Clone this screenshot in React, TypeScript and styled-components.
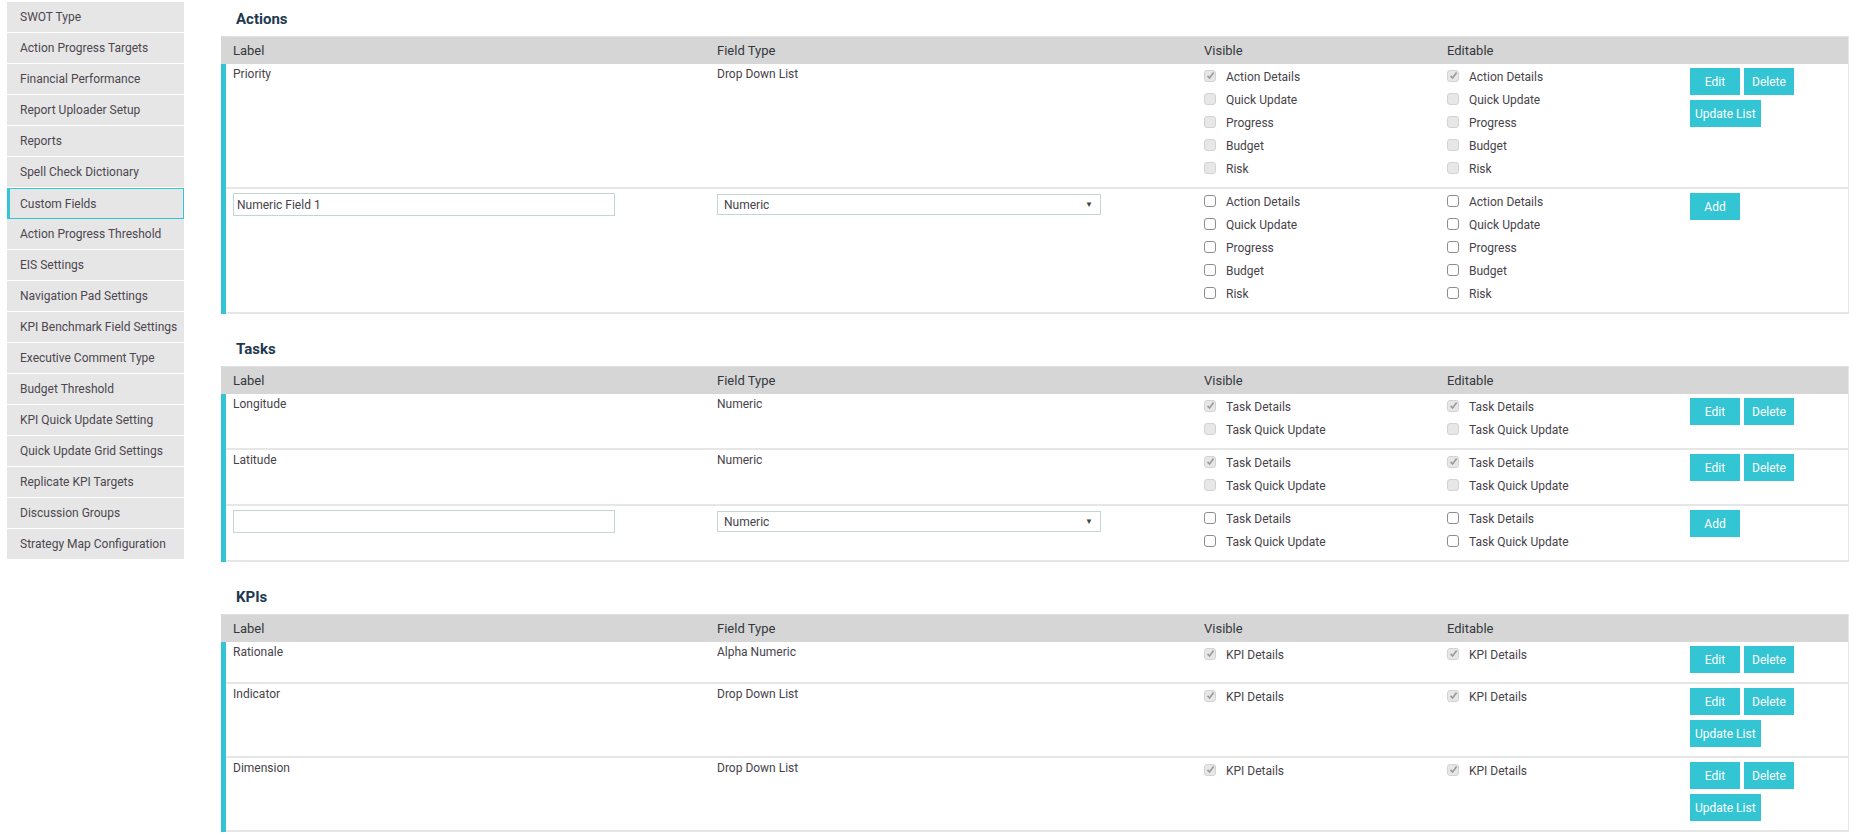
import React from "react";
import styled, { createGlobalStyle, css } from "styled-components";

const TEAL = "#33c5d4";

const GlobalStyle = createGlobalStyle`
  html, body {
    margin: 0;
    padding: 0;
    background: #ffffff;
    overflow: hidden;
  }
  body {
    font-family: Roboto, "Liberation Sans", Arial, sans-serif;
    font-size: 12px;
    color: #444;
  }
  * { box-sizing: border-box; }
`;

const Page = styled.div`
  display: flex;
  align-items: flex-start;
  padding-left: 7px;
  padding-right: 15px;
`;

const Sidebar = styled.nav`
  width: 177px;
  flex-shrink: 0;
  margin-top: 2px;
  display: flex;
  flex-direction: column;
`;

const NavItem = styled.div<{ $active?: boolean }>`
  height: 31px;
  display: flex;
  align-items: center;
  padding-left: 13px;
  background: #e6e6e6;
  border-bottom: 1px solid #ffffff;
  font-size: 12px;
  color: #4d4650;
  white-space: nowrap;
  ${(p) =>
    p.$active &&
    css`
      border: 1px solid ${TEAL};
      border-left: 3px solid ${TEAL};
      padding-left: 10px;
    `}
`;

const Main = styled.main`
  flex: 1;
  margin-left: 37px;
  padding-top: 10px;
  display: flex;
  flex-direction: column;
  gap: 26px;
`;

const Section = styled.section`
  display: flex;
  flex-direction: column;
`;

const Heading = styled.h3`
  margin: 0 0 8px 15px;
  font-size: 15px;
  line-height: 18px;
  font-weight: 700;
  color: #22384f;
`;

const COLS = "484fr 487fr 243fr 243fr 165fr";

const HeaderRow = styled.div`
  display: grid;
  grid-template-columns: ${COLS};
  height: 28px;
  background: #d6d6d6;
  border-top: 1px solid #e3e3e3;
  border-left: 5px solid #d6d6d6;
  border-right: 1px solid #e6e6e6;
  align-items: center;
  font-size: 13px;
  color: #34383d;
`;

const HeaderCell = styled.div`
  padding: 0 7px;
`;

const Body = styled.div`
  border-left: 5px solid ${TEAL};
  border-right: 1px solid #e6e6e6;
  display: flex;
  flex-direction: column;
`;

const Row = styled.div`
  display: grid;
  grid-template-columns: ${COLS};
  border-bottom: 2px solid #e6e6e6;
  align-items: start;
`;

const TextCell = styled.div`
  padding: 1px 7px 0;
  line-height: 18px;
  font-size: 12px;
  color: #47434b;
`;

const InputCell = styled.div`
  padding: 4px 7px 0;
`;

const TextInput = styled.input`
  width: 382px;
  height: 23px;
  border: 1px solid #c4d5d8;
  padding: 0 3px;
  font-family: Roboto, "Liberation Sans", Arial, sans-serif;
  font-size: 12px;
  color: #47434b;
  background: #fff;
  outline: none;
`;

const SelectBox = styled.div`
  margin-top: 1px;
  width: 384px;
  height: 21px;
  border: 1px solid #c4d5d8;
  display: flex;
  align-items: center;
  justify-content: space-between;
  padding: 0 7px 0 6px;
  font-size: 12px;
  color: #47434b;
  background: #fff;
`;

const Arrow = styled.span`
  font-size: 8px;
  color: #444;
`;

const CheckCell = styled.div`
  padding: 1px 7px 7px;
  display: flex;
  flex-direction: column;
`;

const CheckItem = styled.div`
  height: 23px;
  display: flex;
  align-items: center;
  gap: 10px;
  font-size: 12px;
  color: #47434b;
`;

const Box = styled.span<{ $disabled?: boolean }>`
  width: 12px;
  height: 12px;
  flex-shrink: 0;
  border-radius: 3px;
  display: flex;
  align-items: center;
  justify-content: center;
  margin-top: -2px;
  ${(p) =>
    p.$disabled
      ? css`
          background: #e7e7e7;
          border: 1px solid #d3d3d3;
        `
      : css`
          background: #fff;
          border: 1px solid #8e8e8e;
        `}
`;

const ActionCell = styled.div`
  padding: 4px 7px 9px;
  display: flex;
  flex-direction: column;
  gap: 5px;
`;

const ButtonRow = styled.div`
  display: flex;
  gap: 4px;
`;

const Button = styled.button`
  height: 27px;
  min-width: 50px;
  padding: 0 5px;
  border: none;
  border-radius: 0;
  background: ${TEAL};
  color: #fff;
  font-family: Roboto, "Liberation Sans", Arial, sans-serif;
  font-size: 12px;
  cursor: pointer;
`;

type Check = { label: string; checked?: boolean };

function Checkbox({ checked, disabled }: { checked?: boolean; disabled?: boolean }) {
  return (
    <Box $disabled={disabled}>
      {checked && (
        <svg width="9" height="9" viewBox="0 0 9 9">
          <path d="M1.5 4.8 L3.6 7 L7.6 1.6" fill="none" stroke="#9c9c9c" strokeWidth="1.7" />
        </svg>
      )}
    </Box>
  );
}

function CheckList({ items, disabled }: { items: Check[]; disabled?: boolean }) {
  return (
    <CheckCell>
      {items.map((it) => (
        <CheckItem key={it.label}>
          <Checkbox checked={it.checked} disabled={disabled} />
          <span>{it.label}</span>
        </CheckItem>
      ))}
    </CheckCell>
  );
}

type FieldRow = {
  label: string;
  type: string;
  items: Check[];
  list?: boolean;
  isNew?: boolean;
};

function Header() {
  return (
    <HeaderRow>
      <HeaderCell>Label</HeaderCell>
      <HeaderCell>Field Type</HeaderCell>
      <HeaderCell>Visible</HeaderCell>
      <HeaderCell>Editable</HeaderCell>
      <HeaderCell />
    </HeaderRow>
  );
}

function FieldTableRow({ row }: { row: FieldRow }) {
  return (
    <Row>
      {row.isNew ? (
        <InputCell>
          <TextInput defaultValue={row.label} />
        </InputCell>
      ) : (
        <TextCell>{row.label}</TextCell>
      )}
      {row.isNew ? (
        <InputCell>
          <SelectBox>
            <span>{row.type}</span>
            <Arrow>▼</Arrow>
          </SelectBox>
        </InputCell>
      ) : (
        <TextCell>{row.type}</TextCell>
      )}
      <CheckList items={row.items} disabled={!row.isNew} />
      <CheckList items={row.items} disabled={!row.isNew} />
      <ActionCell>
        {row.isNew ? (
          <ButtonRow>
            <Button>Add</Button>
          </ButtonRow>
        ) : (
          <>
            <ButtonRow>
              <Button>Edit</Button>
              <Button>Delete</Button>
            </ButtonRow>
            {row.list && (
              <ButtonRow>
                <Button>Update List</Button>
              </ButtonRow>
            )}
          </>
        )}
      </ActionCell>
    </Row>
  );
}

function FieldSection({ title, rows }: { title: string; rows: FieldRow[] }) {
  return (
    <Section>
      <Heading>{title}</Heading>
      <Header />
      <Body>
        {rows.map((r, i) => (
          <FieldTableRow key={i} row={r} />
        ))}
      </Body>
    </Section>
  );
}

const actionItems = (first: boolean): Check[] => [
  { label: "Action Details", checked: first },
  { label: "Quick Update" },
  { label: "Progress" },
  { label: "Budget" },
  { label: "Risk" },
];

const taskItems = (first: boolean): Check[] => [
  { label: "Task Details", checked: first },
  { label: "Task Quick Update" },
];

const kpiItems: Check[] = [{ label: "KPI Details", checked: true }];

const actions: FieldRow[] = [
  { label: "Priority", type: "Drop Down List", items: actionItems(true), list: true },
  { label: "Numeric Field 1", type: "Numeric", items: actionItems(false), isNew: true },
];

const tasks: FieldRow[] = [
  { label: "Longitude", type: "Numeric", items: taskItems(true) },
  { label: "Latitude", type: "Numeric", items: taskItems(true) },
  { label: "", type: "Numeric", items: taskItems(false), isNew: true },
];

const kpis: FieldRow[] = [
  { label: "Rationale", type: "Alpha Numeric", items: kpiItems },
  { label: "Indicator", type: "Drop Down List", items: kpiItems, list: true },
  { label: "Dimension", type: "Drop Down List", items: kpiItems, list: true },
];

const navItems = [
  "SWOT Type",
  "Action Progress Targets",
  "Financial Performance",
  "Report Uploader Setup",
  "Reports",
  "Spell Check Dictionary",
  "Custom Fields",
  "Action Progress Threshold",
  "EIS Settings",
  "Navigation Pad Settings",
  "KPI Benchmark Field Settings",
  "Executive Comment Type",
  "Budget Threshold",
  "KPI Quick Update Setting",
  "Quick Update Grid Settings",
  "Replicate KPI Targets",
  "Discussion Groups",
  "Strategy Map Configuration",
];

export default function App() {
  return (
    <>
      <GlobalStyle />
      <Page>
        <Sidebar>
          {navItems.map((n) => (
            <NavItem key={n} $active={n === "Custom Fields"}>
              {n}
            </NavItem>
          ))}
        </Sidebar>
        <Main>
          <FieldSection title="Actions" rows={actions} />
          <FieldSection title="Tasks" rows={tasks} />
          <FieldSection title="KPIs" rows={kpis} />
        </Main>
      </Page>
    </>
  );
}
